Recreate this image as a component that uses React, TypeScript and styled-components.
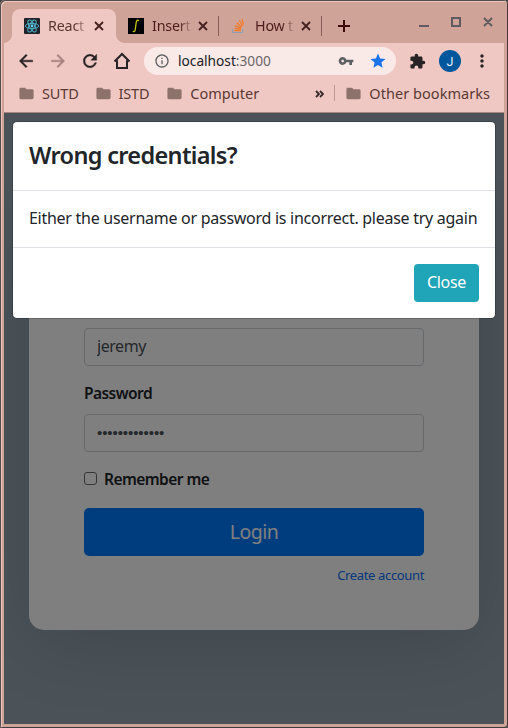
import React from 'react';
import styled, { createGlobalStyle, css } from 'styled-components';
import { MdArrowBack, MdArrowForward, MdRefresh, MdFolder, MdStar, MdExtension, MdMoreVert, MdVpnKey, MdInfoOutline } from 'react-icons/md';

const GlobalStyle = createGlobalStyle`
  *, *::before, *::after { box-sizing: border-box; }
  body { margin: 0; background: #3f4447; font-family: 'Noto Sans', sans-serif; overflow: hidden; }
  button, input { font-family: inherit; }
`;

const Window = styled.div`
  display: flex;
  flex-direction: column;
  width: 508px;
  height: 728px;
  padding: 0 4px 4px;
  border-radius: 5px 5px 3px 3px;
  background: #cfa398;
  box-shadow: inset 1px 1px 0 #514e50, inset -1px -1px 0 #3c3c3e, inset 2px 2px 0 #edc5bd;
`;

const TabStrip = styled.div`
  display: flex;
  flex: none;
  height: 43px;
  padding: 9px 0 0 8px;
`;

const Tab = styled.div<{ $active?: boolean; $width: number }>`
  position: relative;
  display: flex;
  align-items: center;
  width: ${p => p.$width}px;
  height: 34px;
  padding-left: 12px;
  border-radius: 8px 8px 0 0;
  color: ${p => (p.$active ? '#593630' : '#4c1b1b')};
  ${p => p.$active && css`
    background: #f0c8c3;
    &::before, &::after {
      content: '';
      position: absolute;
      bottom: 0;
      width: 8px;
      height: 8px;
    }
    &::before { left: -8px; background: radial-gradient(circle at 0 0, transparent 7.5px, #f0c8c3 8px); }
    &::after { right: -8px; background: radial-gradient(circle at 100% 0, transparent 7.5px, #f0c8c3 8px); }
  `}
`;

const TabTitle = styled.span`
  width: 41px;
  margin: -1px 0 0 8px;
  overflow: hidden;
  white-space: nowrap;
  font-size: 14.3px;
  font-weight: 450;
  letter-spacing: -0.2px;
  line-height: 20px;
  mask-image: linear-gradient(to right, #000 66%, rgba(0, 0, 0, 0.15) 94%);
`;

const CloseGlyph = styled.svg`
  width: 10px;
  height: 10px;
  margin-left: 5px;
  fill: none;
  stroke: #43201e;
  stroke-width: 1.8;
`;

const TabDivider = styled.span`
  width: 1px;
  height: 20px;
  margin-top: 7px;
  background: #8d5b57;
`;

const NewTab = styled.svg`
  width: 12px;
  height: 12px;
  margin: 11px 0 0 16px;
  stroke: #3d0708;
  stroke-width: 2;
`;

const WindowControls = styled.svg`
  width: 76px;
  height: 12px;
  margin: 7px 0 0 69px;
  fill: none;
  stroke: #605b60;
  stroke-width: 2;
`;

const Favicon = styled.svg`
  flex: none;
  width: 16px;
  height: 16px;
`;

const Toolbar = styled.div`
  display: flex;
  flex: none;
  align-items: center;
  height: 36px;
  padding-left: 12px;
  background: #f0c8c3;
  color: #272223;
`;

const NavButton = styled.button<{ $muted?: boolean }>`
  display: flex;
  align-items: center;
  justify-content: center;
  width: 20px;
  height: 20px;
  margin-right: 12px;
  padding: 0;
  border: 0;
  background: none;
  color: ${p => (p.$muted ? '#a78481' : '#272223')};
  svg { width: 20px; height: 20px; flex: none; }
  svg[stroke-width='0'] path:last-child { stroke-width: 0.5; }
`;

const AddressBar = styled.div`
  display: flex;
  align-items: center;
  width: 252px;
  height: 28px;
  padding: 0 10px;
  border-radius: 14px;
  background: #f9e9e7;
  color: #5f6063;
`;

const Url = styled.span`
  flex: 1;
  margin-left: 8px;
  color: #202124;
  font-size: 13.7px;
  line-height: 20px;
  em { color: #6b6667; font-style: normal; }
`;

const KeyIcon = styled(MdVpnKey)`
  width: 16px;
  height: 16px;
  margin-right: 15px;
`;

const StarIcon = styled(MdStar)`
  width: 18px;
  height: 18px;
  margin-right: -1px;
  color: #1a73e8;
`;

const PuzzleIcon = styled(MdExtension)`
  width: 17px;
  height: 17px;
  margin-left: 13px;
`;

const Avatar = styled.span`
  display: flex;
  align-items: center;
  justify-content: center;
  width: 22px;
  height: 22px;
  margin-left: 13px;
  border-radius: 50%;
  background: #01579b;
  color: #e8f3fb;
  font-family: Roboto, sans-serif;
  font-size: 12.5px;
`;

const MenuIcon = styled(MdMoreVert)`
  width: 20px;
  height: 20px;
  margin-left: 11px;
`;

const BookmarksBar = styled.div`
  display: flex;
  flex: none;
  align-items: center;
  height: 34px;
  padding: 0 14px 5px 15px;
  border-bottom: 1px solid #a48580;
  background: #f0c8c3;
`;

const Bookmark = styled.div<{ $gap: number; $tracking?: number }>`
  display: flex;
  align-items: center;
  gap: 7px;
  margin-right: ${p => p.$gap}px;
  color: #5a3934;
  font-size: 14.5px;
  letter-spacing: ${p => p.$tracking ?? 0}px;
  line-height: 20px;
  white-space: nowrap;
  svg { width: 17px; height: 17px; margin: 1px 0 0 -1px; color: #8d716b; }
`;

const Overflow = styled.svg`
  width: 9px;
  height: 8px;
  margin: 1px 0 0 auto;
  fill: none;
  stroke: #36282a;
  stroke-width: 1.8;
`;

const BarDivider = styled.span`
  width: 1px;
  height: 16px;
  margin: 0 11px 0 10px;
  background: #bd9891;
`;

const Viewport = styled.main`
  position: relative;
  display: flex;
  flex: 1;
  align-items: center;
  justify-content: center;
  overflow: hidden;
  background: #98a7b1;
`;

const LoginCard = styled.form`
  display: flex;
  flex-direction: column;
  width: 450px;
  height: 423px;
  padding: 121px 55px 45px;
  border-radius: 15px;
  background: #fff;
  box-shadow: 0 14px 80px rgba(34, 35, 58, 0.2);
  color: #212529;
`;

const Field = styled.input`
  flex: none;
  width: 100%;
  height: 38px;
  margin-bottom: 16px;
  padding: 5px 12px 7px;
  border: 1px solid #ced4da;
  border-radius: 4px;
  background: #fff;
  color: #495057;
  font-size: 16px;
  letter-spacing: -0.45px;
`;

const PasswordField = styled(Field)`
  font-family: 'Liberation Sans', sans-serif;
  font-size: 15px;
  letter-spacing: -0.08px;
`;

const Label = styled.label`
  margin: -1px 0 9px;
  font-size: 15.5px;
  font-weight: 600;
  letter-spacing: -0.55px;
  line-height: 24px;
`;

const Remember = styled(Label)`
  display: flex;
  align-items: center;
  gap: 7px;
  margin-bottom: 17px;
`;

const Checkbox = styled.input`
  width: 13px;
  height: 13px;
  margin: -1px 0 0;
  appearance: none;
  border: 1px solid #6c6c6c;
  border-radius: 3px;
`;

const LoginButton = styled.button`
  flex: none;
  height: 48px;
  padding: 0 0 2px;
  border: 0;
  border-radius: 5px;
  background: #007bff;
  color: #fff;
  font-size: 19.5px;
  letter-spacing: -0.5px;
`;

const CreateLink = styled.a`
  align-self: flex-end;
  margin-top: 10px;
  color: #0a70f4;
  font-size: 13px;
  letter-spacing: -0.35px;
  line-height: 19.5px;
`;

const Backdrop = styled.div`
  position: absolute;
  inset: 0;
  padding: 8px;
  background: rgba(0, 0, 0, 0.5);
`;

const Dialog = styled.section`
  border: 1px solid rgba(0, 0, 0, 0.2);
  border-radius: 5px;
  background: #fff;
  background-clip: padding-box;
  color: #212529;
`;

const DialogTitle = styled.h4`
  margin: 0;
  padding: 15px 16px 17px;
  border-bottom: 1px solid #dee2e6;
  font-size: 23.5px;
  font-weight: 570;
  letter-spacing: -0.67px;
  line-height: 36px;
`;

const DialogBody = styled.p`
  margin: 0;
  padding: 15px 16px 17px;
  border-bottom: 1px solid #dee2e6;
  font-size: 16px;
  letter-spacing: -0.272px;
  line-height: 24px;
  white-space: nowrap;
`;

const DialogFooter = styled.footer`
  display: flex;
  justify-content: flex-end;
  padding: 16px;
`;

const CloseButton = styled.button`
  width: 65px;
  height: 38px;
  padding: 0 0 2px;
  border: 0;
  border-radius: 4px;
  background: #20a4b8;
  color: #fff;
  font-size: 16px;
  letter-spacing: -0.3px;
`;

const TabClose = () => (
  <CloseGlyph viewBox="0 0 10 10"><path d="M1 1l8 8M9 1L1 9" /></CloseGlyph>
);

const ReactMark = () => (
  <Favicon viewBox="0 0 16 16">
    <rect width="16" height="16" rx="1" fill="#20232a" />
    <g fill="none" stroke="#53b9d1" strokeWidth=".9">
      <ellipse cx="8" cy="8" rx="6.7" ry="2.6" />
      <ellipse cx="8" cy="8" rx="6.7" ry="2.6" transform="rotate(60 8 8)" />
      <ellipse cx="8" cy="8" rx="6.7" ry="2.6" transform="rotate(120 8 8)" />
    </g>
    <circle cx="8" cy="8" r="1.4" fill="#61dafb" />
  </Favicon>
);

const IntegralMark = () => (
  <Favicon viewBox="0 0 16 16">
    <rect width="16" height="16" fill="#000" />
    <path d="M10.7 3.1C9.8 1.5 8.5 2.2 8.2 4.5L7.3 11.2C7 13.7 5.9 14.4 5 13" fill="none" stroke="#c3c40d" strokeWidth="1.3" />
  </Favicon>
);

const StackMark = () => (
  <Favicon viewBox="0 0 16 16" fill="none">
    <path d="M1.6 11v3.5h10V11" stroke="#8fa0ac" strokeWidth="1.1" />
    <path d="M3.4 12.5h6.4M3.5 10.2l6.4 .9M4.1 7.6l6 2.3M5.8 4.8l5 4.2M8.3 2.5l3.4 5.5M11 1.2l1.4 5.4" stroke="#f47b2a" strokeWidth="1.3" />
  </Favicon>
);

export default function App() {
  return (
    <Window>
      <GlobalStyle />
      <TabStrip>
        <Tab $active $width={104}><ReactMark /><TabTitle>React</TabTitle><TabClose /></Tab>
        <Tab $width={102}><IntegralMark /><TabTitle>Insert</TabTitle><TabClose /></Tab>
        <TabDivider />
        <Tab $width={102}><StackMark /><TabTitle>How t</TabTitle><TabClose /></Tab>
        <TabDivider />
        <NewTab viewBox="0 0 12 12"><path d="M6 0v12M0 6h12" /></NewTab>
        <WindowControls viewBox="0 0 76 12">
          <path d="M0 10h10M33 2h8v8h-8zM65 2l8 8M73 2l-8 8" />
        </WindowControls>
      </TabStrip>
      <Toolbar>
        <NavButton aria-label="Back"><MdArrowBack /></NavButton>
        <NavButton aria-label="Forward" $muted><MdArrowForward /></NavButton>
        <NavButton aria-label="Reload"><MdRefresh /></NavButton>
        <NavButton aria-label="Home">
          <svg viewBox="0 0 20 20" fill="none" stroke="currentColor" strokeWidth="2"><path d="M2.5 10.5L10 3l7.5 7.5M5 9.2V17h10V9.2" /></svg>
        </NavButton>
        <AddressBar>
          <MdInfoOutline size={16} />
          <Url>localhost<em>:3000</em></Url>
          <KeyIcon />
          <StarIcon />
        </AddressBar>
        <PuzzleIcon />
        <Avatar>J</Avatar>
        <MenuIcon />
      </Toolbar>
      <BookmarksBar>
        <Bookmark $gap={17} $tracking={-0.15}><MdFolder />SUTD</Bookmark>
        <Bookmark $gap={18} $tracking={-0.2}><MdFolder />ISTD</Bookmark>
        <Bookmark $gap={0}><MdFolder />Computer</Bookmark>
        <Overflow viewBox="0 0 9 8"><path d="M1 1l3 3-3 3M5 1l3 3-3 3" /></Overflow>
        <BarDivider />
        <Bookmark $gap={0} $tracking={0.04}><MdFolder />Other bookmarks</Bookmark>
      </BookmarksBar>
      <Viewport>
        <LoginCard>
          <Field defaultValue="jeremy" aria-label="Username" />
          <Label htmlFor="password">Password</Label>
          <PasswordField id="password" type="password" defaultValue="•••••••••••••" />
          <Remember><Checkbox type="checkbox" />Remember me</Remember>
          <LoginButton type="button">Login</LoginButton>
          <CreateLink>Create account</CreateLink>
        </LoginCard>
        <Backdrop>
          <Dialog role="dialog">
            <DialogTitle>Wrong credentials?</DialogTitle>
            <DialogBody>Either the username or password is incorrect. please try again</DialogBody>
            <DialogFooter><CloseButton>Close</CloseButton></DialogFooter>
          </Dialog>
        </Backdrop>
      </Viewport>
    </Window>
  );
}
